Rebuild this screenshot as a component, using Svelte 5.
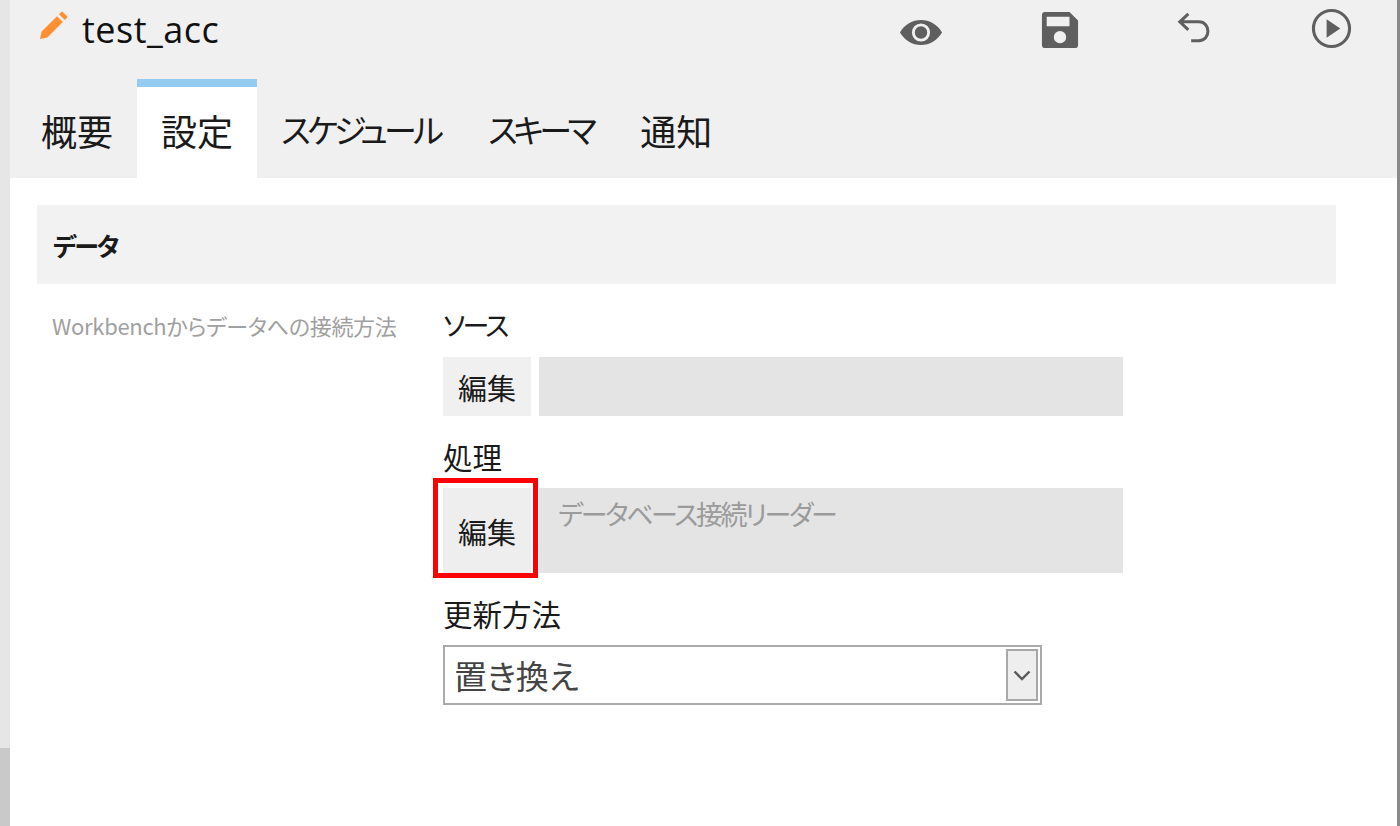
<script>
  // the original font sets kana much narrower, so kana tabs get a smaller size and their own tracking
  const tabs = [
    { label: '概要' },
    { label: '設定' },
    { label: 'スケジュール', kana: true, track: '-0.115em' },
    { label: 'スキーマ', kana: true, track: '-0.14em' },
    { label: '通知' }
  ];
  let active = $state(1);
  let mode = $state('置き換え');
</script>

<div class="window">
  <div class="gutter"><div class="thumb"></div></div>

  <div class="main">
    <header class="top">
      <div class="title-row">
        <div class="title">
          <svg class="pencil" viewBox="0 0 32 32" width="32" height="32">
            <path d="M3 29l1.6-7.4L20 6.2l5.8 5.8L10.4 27.4z M22 4.2l2-2c.6-.6 1.5-.6 2.1 0l3.7 3.7c.6.6.6 1.5 0 2.1l-2 2z" fill="#ff8f33" />
          </svg>
          <span>test_acc</span>
        </div>
        <div class="actions">
          <button class="icon eye" aria-label="プレビュー">
            <svg viewBox="0 0 46 32" width="44" height="31">
              <path fill-rule="evenodd" d="M1 16C6 7.500 14 3 23 3s17 4.500 22 13c-5 8.500-13 13-22 13S6 24.500 1 16z M23 6.500a9.500 9.500 0 1 0 0 19a9.500 9.500 0 1 0 0-19z" fill="#5f5f5f" />
              <circle cx="23" cy="16" r="6.500" fill="#5f5f5f" />
            </svg>
          </button>
          <button class="icon save" aria-label="保存">
            <svg viewBox="0 0 40 40" width="38" height="38">
              <path fill-rule="evenodd" d="M4 1h26l9 9v26c0 1.700-1.300 3-3 3H4c-1.700 0-3-1.300-3-3V4c0-1.700 1.300-3 3-3z M6 6v10h24V6z M20 21a6.500 6.500 0 1 0 0 13a6.500 6.500 0 1 0 0-13z" fill="#5f5f5f" />
            </svg>
          </button>
          <button class="icon" aria-label="元に戻す">
            <svg viewBox="0 0 36 36" width="34" height="34">
              <path d="M12 3L3 11.500l9 8.500 M4 11.500h19c13 0 13 20 0 20h-8" fill="none" stroke="#5f5f5f" stroke-width="3.200" />
            </svg>
          </button>
          <button class="icon play" aria-label="実行">
            <svg viewBox="0 0 42 42" width="41" height="41">
              <circle cx="21" cy="21" r="18.500" fill="none" stroke="#5f5f5f" stroke-width="3.200" />
              <path d="M16 11.500L30 21 16 30.500z" fill="#5f5f5f" />
            </svg>
          </button>
        </div>
      </div>

      <nav class="tabs">
        {#each tabs as tab, i}
          <button
            class="tab"
            class:active={i === active}
            class:kana={tab.kana}
            style:letter-spacing={tab.track}
            onclick={() => (active = i)}
          >{tab.label}</button>
        {/each}
      </nav>
    </header>

    <section class="panel">
      <h2 class="section-head">データ</h2>

      <div class="section-body">
        <p class="hint">Workbenchからデータへの接続方法</p>

        <div class="form">
          <div class="field">
            <div class="label kana">ソース</div>
            <div class="picker">
              <button class="edit">編集</button>
              <div class="value"></div>
            </div>
          </div>

          <div class="field">
            <div class="label">処理</div>
            <div class="picker tall">
              <button class="edit marked">編集</button>
              <div class="value">データベース接続リーダー</div>
            </div>
          </div>

          <div class="field">
            <div class="label">更新方法</div>
            <div class="select">
              <span>{mode}</span>
              <span class="arrow">
                <svg viewBox="0 0 18 11" width="18" height="11">
                  <path d="M1.500 1.500L9 9l7.500-7.500" fill="none" stroke="#5a5a5a" stroke-width="2.400" />
                </svg>
              </span>
            </div>
          </div>
        </div>
      </div>
    </section>
  </div>

  <div class="edge"></div>
</div>

<style>
  :global(body) {
    margin: 0;
    background: #fff;
    font-family: "Noto Sans CJK JP", "Open Sans", sans-serif;
    font-feature-settings: "palt";
    color: #1a1a1a;
  }

  .window {
    display: flex;
    width: 1400px;
    height: 826px;
    overflow: hidden;
  }

  .gutter {
    width: 10px;
    flex: none;
    display: flex;
    flex-direction: column;
    justify-content: flex-end;
    background: #e6e6e6;
  }

  .thumb {
    height: 78px;
    background: #c9c9c9;
  }

  .main {
    flex: 1;
    min-width: 0;
  }

  .edge {
    width: 3px;
    flex: none;
    background: #8a8a8a;
  }

  .top {
    height: 178px;
    background: #f0f0f0;
    display: flex;
    flex-direction: column;
    justify-content: space-between;
  }

  .title-row {
    display: flex;
    justify-content: space-between;
    padding-top: 8px;
  }

  .title {
    display: flex;
    align-items: flex-start;
    gap: 13px;
    padding-left: 27px;
    font-family: "Open Sans", sans-serif;
    font-size: 36px;
    letter-spacing: 0.5px;
    line-height: 44px;
    color: #111;
  }

  .pencil {
    margin-top: 2px;
  }

  .actions {
    display: flex;
    align-items: center;
    gap: 98px;
    padding-right: 45px;
    height: 40px;
  }

  .icon {
    display: flex;
    border: 0;
    padding: 0;
    background: none;
  }

  .eye {
    margin-top: 8px;
  }

  .save {
    margin-top: 3px;
  }

  .play {
    margin-left: 2px;
  }

  .tabs {
    display: flex;
    align-items: stretch;
    padding-left: 7px;
  }

  .tab {
    height: 99px;
    box-sizing: border-box;
    padding: 0 24px 6px;
    border: 0;
    border-top: 8px solid transparent;
    background: none;
    font-family: inherit;
    font-feature-settings: inherit;
    font-size: 36px;
    line-height: 1;
    color: #1a1a1a;
    white-space: nowrap;
  }

  .tab.kana {
    font-size: 33px;
  }

  .tab.active {
    background: #fff;
    border-top-color: #94cbf0;
  }

  .panel {
    padding: 27px 61px 0 27px;
  }

  .section-head {
    margin: 0;
    height: 79px;
    display: flex;
    align-items: center;
    padding-left: 16px;
    background: #f2f2f2;
    font-size: 25px;
    font-weight: 700;
    letter-spacing: -0.08em;
    color: #1a1a1a;
  }

  .section-body {
    display: flex;
    padding-top: 22px;
  }

  .hint {
    width: 406px;
    flex: none;
    margin: 0;
    padding: 1px 0 0 15px;
    box-sizing: border-box;
    font-size: 22px;
    letter-spacing: -0.3px;
    line-height: 36px;
    color: #a0a0a0;
    white-space: nowrap;
  }

  .form {
    width: 680px;
    display: flex;
    flex-direction: column;
    gap: 21px;
  }

  .label {
    font-size: 29.500px;
    line-height: 38px;
    margin-bottom: 13px;
  }

  .label.kana {
    font-size: 27px;
    letter-spacing: -0.1em;
  }

  .picker {
    display: flex;
    gap: 8px;
    height: 59px;
  }

  .picker.tall {
    height: 85px;
  }

  .edit {
    width: 88px;
    border: 0;
    padding: 0;
    background: #f0f0f0;
    font-family: inherit;
    font-size: 29px;
    color: #1a1a1a;
  }

  /* red annotation box drawn over the button */
  .edit.marked {
    position: relative;
    background: #eeeeee;
  }

  .edit.marked::after {
    content: "";
    position: absolute;
    left: -10px;
    top: -10px;
    width: 105px;
    height: 100px;
    box-sizing: border-box;
    border: 5.500px solid #f00;
  }

  .value {
    flex: 1;
    background: #e4e4e4;
    padding: 6px 19px;
    font-size: 27px;
    letter-spacing: -0.09em;
    line-height: 40px;
    color: #9b9b9b;
  }

  .select {
    width: 599px;
    height: 60px;
    box-sizing: border-box;
    border: 2px solid #ababab;
    display: flex;
    align-items: center;
    justify-content: space-between;
    padding: 0 2px 0 9px;
    font-size: 33px;
    color: #444;
  }

  .arrow {
    width: 32px;
    height: 52px;
    box-sizing: border-box;
    border: 2px solid #a8a8a8;
    background: #eeeeee;
    display: flex;
    align-items: center;
    justify-content: center;
  }
</style>
